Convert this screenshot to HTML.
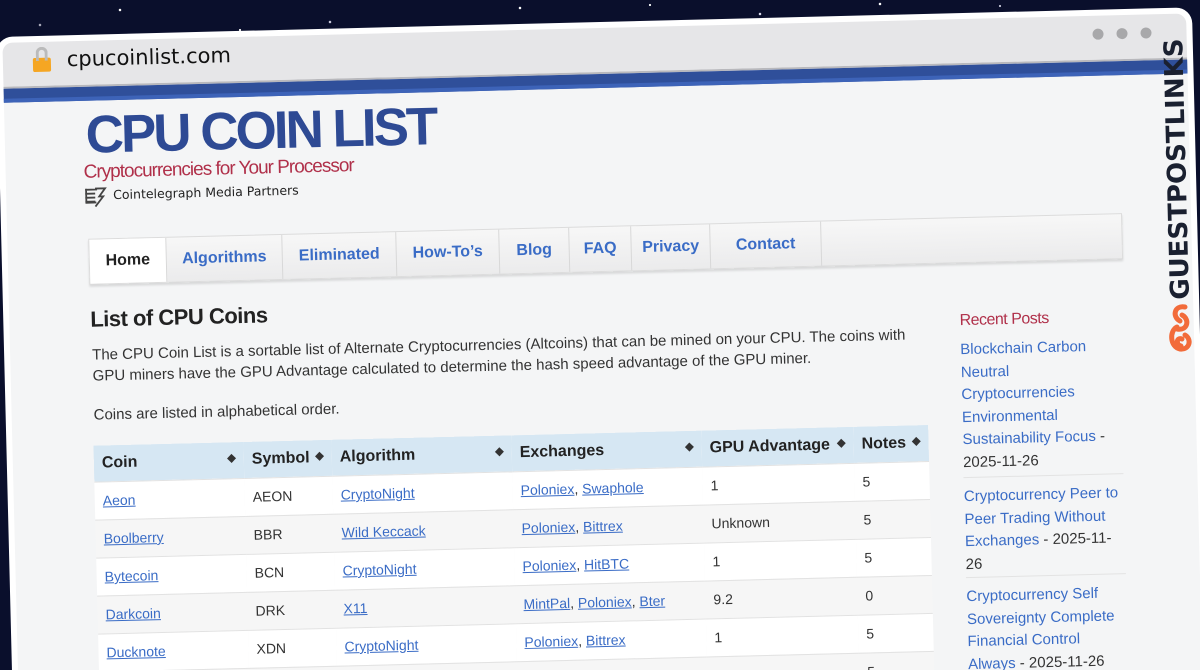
<!DOCTYPE html>
<html><head><meta charset="utf-8"><style>
*{margin:0;padding:0;box-sizing:border-box}
html,body{width:1200px;height:670px;overflow:hidden}
body{background:#0a0f2c;font-family:"Liberation Sans",sans-serif;position:relative;
background-image:radial-gradient(circle at 120px 10px,#fff 1px,transparent 1.5px),radial-gradient(circle at 330px 22px,#ccd 1px,transparent 1.5px),radial-gradient(circle at 520px 8px,#fff 1px,transparent 1.5px),radial-gradient(circle at 760px 14px,#dde 1px,transparent 1.5px),radial-gradient(circle at 880px 4px,#fff 1px,transparent 1.5px),radial-gradient(circle at 40px 25px,#aab 1px,transparent 1.5px),radial-gradient(circle at 240px 30px,#fff 0.8px,transparent 1.3px),radial-gradient(circle at 650px 5px,#fff 0.8px,transparent 1.3px),radial-gradient(circle at 1000px 6px,#ccd 0.8px,transparent 1.3px)}
#w{position:absolute;left:4px;top:22px;width:1196px;height:700px;transform:rotate(-1.42deg);transform-origin:600px 320px;background:#fff;border-radius:16px;overflow:hidden}
#bar{position:absolute;left:6px;top:6px;right:6px;height:46px;background:#e6e6e8;border-radius:10px 10px 0 0;border-bottom:2px solid #b8b8bc}
#blue{position:absolute;left:6px;right:6px;top:52px;height:14px;background:#2f4f9a;border-bottom:4px solid #3d63b8;z-index:2}
#page{position:absolute;left:6px;right:6px;top:66px;bottom:0;background:#f4f5f6}
#c{position:absolute;left:-3px;top:-20px;width:100%;height:100%}
.a{position:absolute}
.lk{color:#3a6cc6;text-decoration:underline}
.nav{position:absolute;left:84px;top:158px;width:1034px;height:46px;background:linear-gradient(#f7f7f7,#ebebec);border:1px solid #dcdcdc;box-shadow:0 2px 2px rgba(0,0,0,.12);display:flex}
.nav div{height:100%;display:flex;align-items:center;justify-content:center;font-weight:bold;font-size:16px;color:#3a6cc6;border-right:1px solid #d8d8d8}
table{position:absolute;left:84px;top:365px;border-collapse:collapse;font-size:14px;color:#333}
th{background:#d6e7f3;height:36px;text-align:left;font-size:16px;padding:0 8px;position:relative;color:#222}
th span{position:absolute;right:8px;font-size:11px;color:#333}
td{height:38px;padding:0 8px;border-top:1px solid #e2e2e2}
tr:nth-child(even) td{background:#fff}
tr:nth-child(odd) td{background:#f6f6f6}
.sb{position:absolute;left:953px;font-size:15px;line-height:22.5px;color:#333;white-space:nowrap}
.sb span{color:#3a6cc6}
</style></head><body>
<div id="w">
 <div id="bar">
  <div class="a" style="left:30px;top:16px;width:18px;height:14px;background:#f5a623;border-radius:2px"></div>
  <div class="a" style="left:33px;top:5px;width:12px;height:14px;border:3px solid #bbb;border-bottom:none;border-radius:6px 6px 0 0"></div>
  <div class="a" style="left:64px;top:6px;font-family:'DejaVu Sans',sans-serif;font-size:21px;color:#111">cpucoinlist.com</div>
  <div class="a" style="left:1090px;top:13px;width:11px;height:11px;border-radius:50%;background:#a8a8aa"></div>
  <div class="a" style="left:1114px;top:13px;width:11px;height:11px;border-radius:50%;background:#a8a8aa"></div>
  <div class="a" style="left:1138px;top:13px;width:11px;height:11px;border-radius:50%;background:#a8a8aa"></div>
 </div>
 <div id="blue"></div>
 <div id="page"><div id="c">
  <div class="a" style="left:84px;top:24px;font-size:53px;font-weight:bold;color:#2e4a94;letter-spacing:-3px">CPU COIN LIST</div>
  <div class="a" style="left:81px;top:81px;font-size:19px;color:#b0304a;letter-spacing:-1px">Cryptocurrencies for Your Processor</div>
  <svg class="a" style="left:80px;top:105px" width="24" height="22" viewBox="0 0 24 22"><path d="M2 4h12M2 8h10M2 12h10M2 16h10M3 3v14h10M12 3h10l-6 8h4l-8 10" fill="none" stroke="#444" stroke-width="1.8"/></svg>
  <div class="a" style="left:110px;top:107px;font-family:'DejaVu Sans',sans-serif;font-size:12.5px;color:#222">Cointelegraph Media Partners</div>
  <div class="nav">
   <div style="width:77px;background:#fff;color:#222">Home</div>
   <div style="width:116px">Algorithms</div>
   <div style="width:114px">Eliminated</div>
   <div style="width:103px">How-To’s</div>
   <div style="width:70px">Blog</div>
   <div style="width:62px">FAQ</div>
   <div style="width:79px">Privacy</div>
   <div style="width:111px">Contact</div>
  </div>
  <div class="a" style="left:84px;top:226px;font-size:22px;font-weight:bold;color:#222;letter-spacing:-.5px">List of CPU Coins</div>
  <div class="a" style="left:85px;top:264px;width:840px;font-size:15px;line-height:21px;color:#333">The CPU Coin List is a sortable list of Alternate Cryptocurrencies (Altcoins) that can be mined on your CPU. The coins with GPU miners have the GPU Advantage calculated to determine the hash speed advantage of the GPU miner.</div>
  <div class="a" style="left:85px;top:326px;font-size:15px;color:#333">Coins are listed in alphabetical order.</div>
  <table>
   <tr><th style="width:150px">Coin<span>◆</span></th><th style="width:88px">Symbol<span>◆</span></th><th style="width:180px">Algorithm<span>◆</span></th><th style="width:190px">Exchanges<span>◆</span></th><th style="width:152px">GPU Advantage<span>◆</span></th><th style="width:75px">Notes<span>◆</span></th></tr>
   <tr><td class="lk">Aeon</td><td>AEON</td><td class="lk">CryptoNight</td><td><span class="lk">Poloniex</span>, <span class="lk">Swaphole</span></td><td>1</td><td>5</td></tr>
   <tr><td class="lk">Boolberry</td><td>BBR</td><td class="lk">Wild Keccack</td><td><span class="lk">Poloniex</span>, <span class="lk">Bittrex</span></td><td>Unknown</td><td>5</td></tr>
   <tr><td class="lk">Bytecoin</td><td>BCN</td><td class="lk">CryptoNight</td><td><span class="lk">Poloniex</span>, <span class="lk">HitBTC</span></td><td>1</td><td>5</td></tr>
   <tr><td class="lk">Darkcoin</td><td>DRK</td><td class="lk">X11</td><td><span class="lk">MintPal</span>, <span class="lk">Poloniex</span>, <span class="lk">Bter</span></td><td>9.2</td><td>0</td></tr>
   <tr><td class="lk">Ducknote</td><td>XDN</td><td class="lk">CryptoNight</td><td><span class="lk">Poloniex</span>, <span class="lk">Bittrex</span></td><td>1</td><td>5</td></tr>
   <tr><td class="lk">Fantomcoin</td><td>FCN</td><td class="lk">CryptoNight</td><td><span class="lk">Poloniex</span></td><td>1</td><td>5</td></tr>
  </table>
  <div class="sb" style="top:251px;font-size:16px;color:#b0304a;letter-spacing:-.5px">Recent Posts</div>
  <div class="sb" style="top:280px"><span>Blockchain Carbon</span><br><span>Neutral</span><br><span>Cryptocurrencies</span><br><span>Environmental</span><br><span>Sustainability Focus</span> -<br>2025-11-26</div>
  <div class="a" style="left:953px;top:418px;width:160px;border-top:1px solid #e3e3e3"></div>
  <div class="sb" style="top:427px"><span>Cryptocurrency Peer to</span><br><span>Peer Trading Without</span><br><span>Exchanges</span> - 2025-11-<br>26</div>
  <div class="a" style="left:953px;top:518px;width:160px;border-top:1px solid #e3e3e3"></div>
  <div class="sb" style="top:527px"><span>Cryptocurrency Self</span><br><span>Sovereignty Complete</span><br><span>Financial Control</span><br><span>Always</span> - 2025-11-26</div>
 </div></div>
</div>
<div class="a" style="left:1166px;top:300px;transform:rotate(-91.5deg);transform-origin:0 0;font-family:'DejaVu Sans',sans-serif;font-weight:bold;font-size:26px;color:#1a2030;white-space:nowrap">GUESTPOSTLINKS</div>
<svg class="a" style="left:1168px;top:303px" width="26" height="50" viewBox="0 0 26 50"><path d="M17 4 C6 2 4 14 12 18 M9 26 C20 28 22 16 14 12 M9 24 C1 28 2 44 12 46 C22 47 24 36 17 32 M14 36 C8 34 8 42 13 43" fill="none" stroke="#f26b3a" stroke-width="5" stroke-linecap="round"/></svg>
</body></html>
